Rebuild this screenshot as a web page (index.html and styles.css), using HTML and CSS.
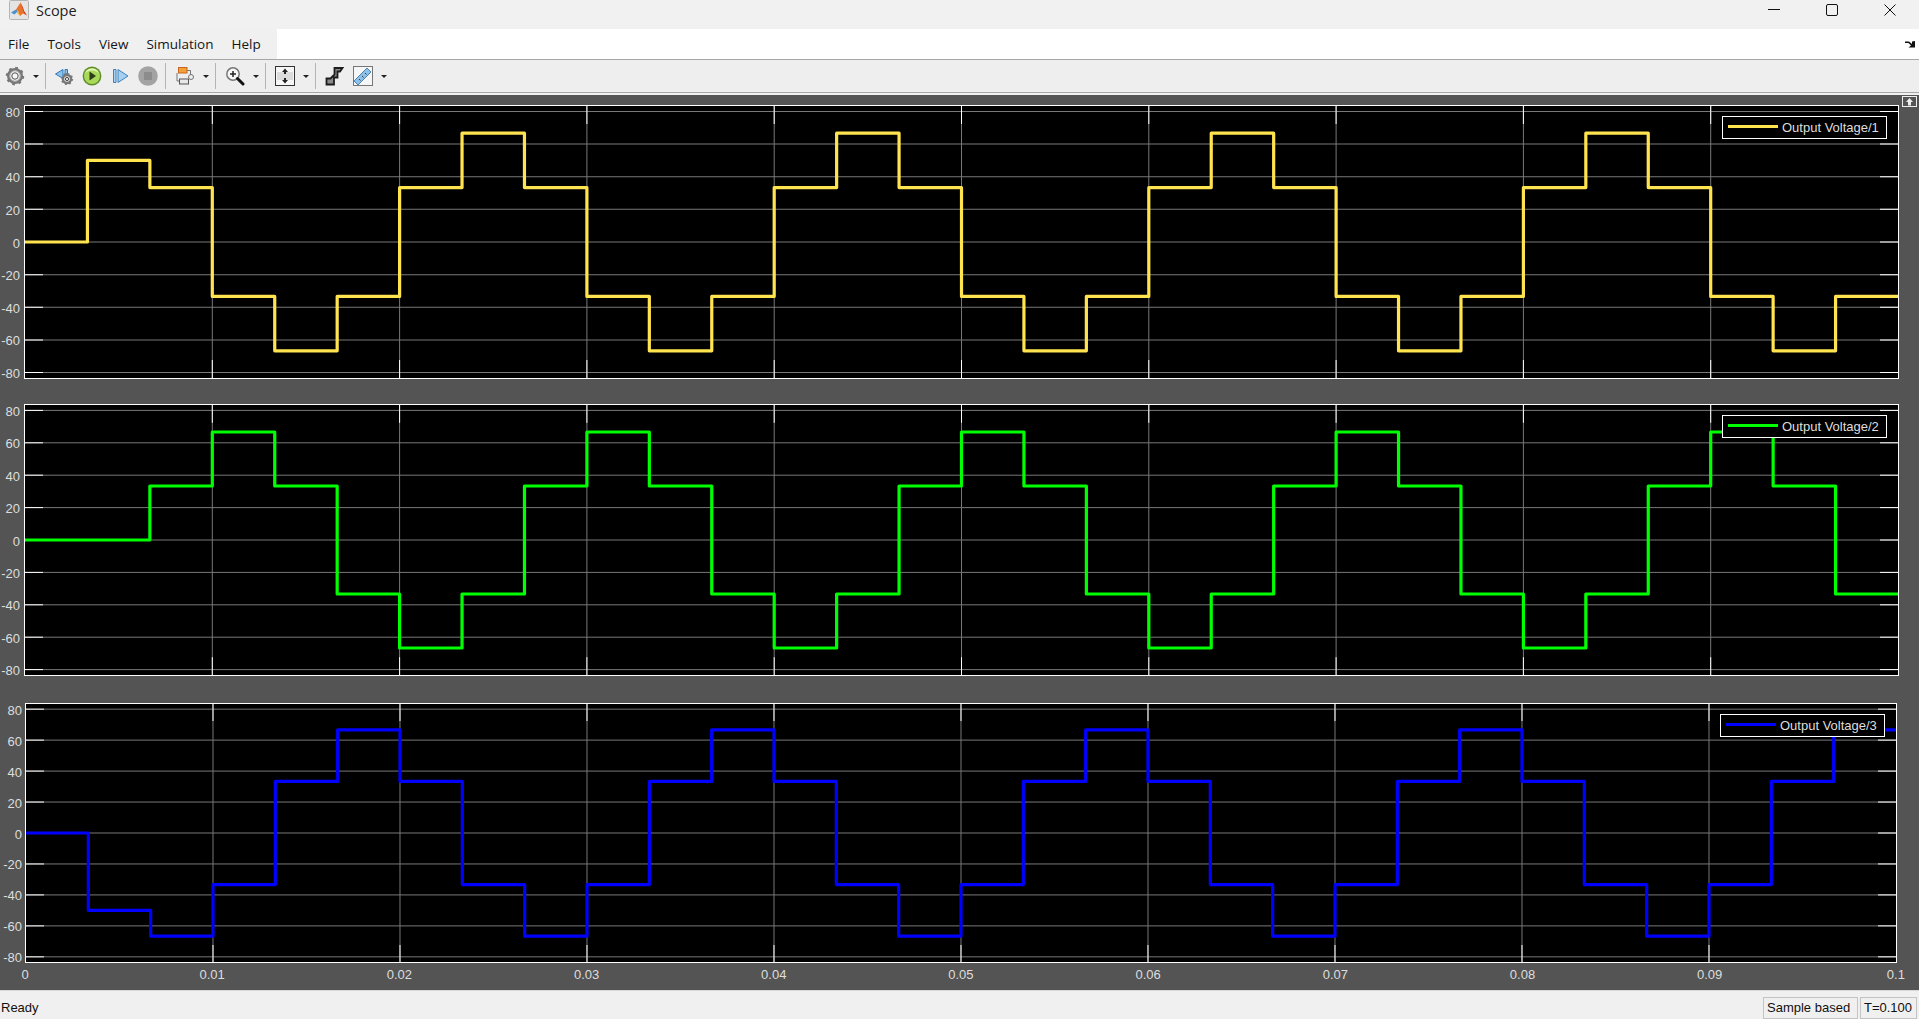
FILE: index.html
```html
<!DOCTYPE html>
<html lang="en">
<head>
<meta charset="utf-8">
<title>Scope</title>
<link rel="stylesheet" href="styles.css">
</head>
<body>
<svg class="defs" width="0" height="0" aria-hidden="true">
  <defs>
    <g id="grid">
      <path class="gridline" d="M0 -2.4H30M0 -1.8H30M0 -1.2H30M0 -.6H30M0 0H30M0 .6H30M0 1.2H30M0 1.8H30M0 2.4H30M3 -2.5V2.5M6 -2.5V2.5M9 -2.5V2.5M12 -2.5V2.5M15 -2.5V2.5M18 -2.5V2.5M21 -2.5V2.5M24 -2.5V2.5M27 -2.5V2.5"/>
      <path class="tick" d="M0 -2.4H.288M0 -1.8H.288M0 -1.2H.288M0 -.6H.288M0 0H.288M0 .6H.288M0 1.2H.288M0 1.8H.288M0 2.4H.288M29.712 -2.4H30M29.712 -1.8H30M29.712 -1.2H30M29.712 -.6H30M29.712 0H30M29.712 .6H30M29.712 1.2H30M29.712 1.8H30M29.712 2.4H30"/>
      <path class="tick" d="M3 -2.5V-2.17M6 -2.5V-2.17M9 -2.5V-2.17M12 -2.5V-2.17M15 -2.5V-2.17M18 -2.5V-2.17M21 -2.5V-2.17M24 -2.5V-2.17M27 -2.5V-2.17M3 2.17V2.5M6 2.17V2.5M9 2.17V2.5M12 2.17V2.5M15 2.17V2.5M18 2.17V2.5M21 2.17V2.5M24 2.17V2.5M27 2.17V2.5"/>
    </g>
  </defs>
</svg>

<header class="titlebar">
  <svg class="logo" viewBox="0 0 20 20" width="20" height="20">
    <rect x=".5" y=".5" width="19" height="19" rx="1" fill="#e4e4e4" stroke="#b4b4b4"/>
    <path d="M2 12.5 7 9.5 9 11 5.5 14.5Z" fill="#4b8fc9"/>
    <path d="M7 9.5 11.5 2.5 15 11 18 15.5 14 13.5 11 16 9 11Z" fill="#e8742a"/>
    <path d="M11.5 2.5 14 7.5 15 11 18 15.5 15 13 13 7Z" fill="#c9332a"/>
    <path d="M9 11 11 16 8 13Z" fill="#f0b030"/>
  </svg>
  <span class="title">Scope</span>
  <div class="winctl">
    <svg class="winbtn" viewBox="0 0 12 12" width="12" height="12"><path d="M0 5.500H12" stroke="#111" fill="none"/></svg>
    <svg class="winbtn" viewBox="0 0 12 12" width="12" height="12"><rect x=".5" y=".5" width="11" height="11" rx="1.5" stroke="#111" fill="none"/></svg>
    <svg class="winbtn" viewBox="0 0 12 12" width="12" height="12"><path d="M.5 .5 11.500 11.500M11.500 .5 .5 11.500" stroke="#111" fill="none"/></svg>
  </div>
</header>

<nav class="menubar">
  <div class="menus">
    <span class="menu">File</span>
    <span class="menu">Tools</span>
    <span class="menu">View</span>
    <span class="menu">Simulation</span>
    <span class="menu">Help</span>
  </div>
  <svg class="menu-dock" viewBox="0 0 10 8" width="10" height="8"><path d="M0 1.500H4L7 4V1.500L10 1V7.500H3.500L6 5.500 3.500 3H0Z" fill="#111"/></svg>
</nav>

<div class="toolbar">
  <span class="tool"><svg viewBox="0 0 20 20" width="20" height="20"><circle cx="10" cy="10" r="6.500" fill="none" stroke="#777" stroke-width="3"/><circle cx="10" cy="10" r="8" fill="none" stroke="#777" stroke-width="2.400" stroke-dasharray="2.600 3.680"/><circle cx="10" cy="10" r="3.200" fill="#f4f4f4" stroke="#555"/><circle cx="10" cy="10" r="5.300" fill="none" stroke="#bbb"/></svg></span>
  <span class="drop"></span>
  <span class="sep sep-first"></span>
  <span class="tool"><svg viewBox="0 0 20 20" width="20" height="20"><path d="M9 3.500V12.500L1.500 8Z" fill="#8fc3ec" stroke="#2f78b8"/><path d="M11 3.500H13.500V8H11Z" fill="#8fc3ec" stroke="#2f78b8"/><circle cx="13" cy="13" r="4" fill="none" stroke="#777" stroke-width="2.400"/><circle cx="13" cy="13" r="5.300" fill="none" stroke="#777" stroke-width="1.600" stroke-dasharray="1.800 2.360"/><circle cx="13" cy="13" r="1.600" fill="#eee" stroke="#444"/></svg></span>
  <span class="tool"><svg viewBox="0 0 20 20" width="20" height="20"><circle cx="10" cy="10" r="9.400" fill="#5d8c26"/><circle cx="10" cy="10" r="8" fill="#a8d95a"/><path d="M3 8.500a7 6 0 0 1 14 0a7 4 0 0 0-14 0Z" fill="#e4f5c0"/><path d="M7.500 5.500 14 10 7.500 14.500Z" fill="#2e3d18"/></svg></span>
  <span class="tool"><svg viewBox="0 0 20 20" width="20" height="20"><path d="M3.500 3.500H6V16.500H3.500Z" fill="#a6d0f0" stroke="#3d82c0"/><path d="M8 3.500V16.500L18 10Z" fill="#a6d0f0" stroke="#3d82c0"/></svg></span>
  <span class="tool"><svg viewBox="0 0 20 20" width="20" height="20"><circle cx="10" cy="10" r="9.800" fill="#a3a3a3"/><rect x="6" y="6" width="8" height="8" fill="#8c8c8c"/></svg></span>
  <span class="sep sep-wide"></span>
  <span class="tool"><svg viewBox="0 0 20 20" width="20" height="20"><path d="M12 4.500H15.500V9M2 7V15H4.500" fill="none" stroke="#777"/><rect x="3.500" y="1.500" width="8.500" height="5.500" fill="#f2a03a" stroke="#c8651e"/><rect x="4.500" y="13" width="9" height="5" fill="#e8e8e8" stroke="#555"/><circle cx="16" cy="11" r="2.500" fill="#eee" stroke="#777"/></svg></span>
  <span class="drop"></span>
  <span class="sep"></span>
  <span class="tool"><svg viewBox="0 0 20 20" width="20" height="20"><circle cx="8" cy="8" r="6.200" fill="#f6f6f6" stroke="#777" stroke-width="1.500"/><path d="M5 8H11M8 5V11" stroke="#222" stroke-width="1.500"/><path d="M12.500 12.500 18 18" stroke="#111" stroke-width="3" stroke-linecap="round"/></svg></span>
  <span class="drop"></span>
  <span class="sep"></span>
  <span class="tool"><svg viewBox="0 0 20 20" width="20" height="20"><rect x=".5" y=".5" width="19" height="19" fill="#f6f6f6" stroke="#333"/><rect x="2" y="6" width="16" height="8" fill="#dcdcdc"/><path d="M10 2.500 13 6H11V8H9V6H7ZM10 17.500 13 14H11V12H9V14H7Z" fill="#222"/></svg></span>
  <span class="drop"></span>
  <span class="sep"></span>
  <span class="tool"><svg viewBox="0 0 20 20" width="20" height="20"><path d="M1.500 18.500V12.500H5.500L9.500 8.500V2H17.500L15 5.500H12.500V11.500H9V18.500Z" fill="#8a8a8a" stroke="#1c1c1c" stroke-width="1.800"/></svg></span>
  <span class="tool"><svg viewBox="0 0 20 20" width="20" height="20"><rect x=".5" y=".5" width="19" height="19" fill="#f6f6f6" stroke="#777"/><path d="M1 15 14 2 18 6 5 19Z" fill="#8cc0e6" stroke="#4a86b8"/><path d="M6 13 7.500 14.500M9 10 10.500 11.500M12 7 13.500 8.500" stroke="#345" fill="none"/></svg></span>
  <span class="drop"></span>
</div>

<main class="scope">
  <svg class="undock" viewBox="0 0 15 11" width="15" height="11"><rect x=".5" y=".5" width="14" height="10" fill="#555" stroke="#eee"/><path d="M7.500 2 11 6H9V9.500H6V6H4Z" fill="#eee"/></svg>

  <section class="row row-a">
    <div class="ylabels"><span>80</span><span>60</span><span>40</span><span>20</span><span>0</span><span>-20</span><span>-40</span><span>-60</span><span>-80</span></div>
    <div class="plot">
      <svg class="axes" viewBox="0 -2.5 30 5" preserveAspectRatio="none"><use href="#grid"/><path class="trace trace-yellow" d="M0 0H1V-1.500H2V-1H3V1H4V2H5V1H6V-1H7V-2H8V-1H9V1H10V2H11V1H12V-1H13V-2H14V-1H15V1H16V2H17V1H18V-1H19V-2H20V-1H21V1H22V2H23V1H24V-1H25V-2H26V-1H27V1H28V2H29V1H30"/></svg>
      <div class="legend"><i class="swatch swatch-yellow"></i><span>Output Voltage/1</span></div>
    </div>
  </section>

  <section class="row row-b">
    <div class="ylabels"><span>80</span><span>60</span><span>40</span><span>20</span><span>0</span><span>-20</span><span>-40</span><span>-60</span><span>-80</span></div>
    <div class="plot">
      <svg class="axes" viewBox="0 -2.5 30 5" preserveAspectRatio="none"><use href="#grid"/><path class="trace trace-green" d="M0 0H2V-1H3V-2H4V-1H5V1H6V2H7V1H8V-1H9V-2H10V-1H11V1H12V2H13V1H14V-1H15V-2H16V-1H17V1H18V2H19V1H20V-1H21V-2H22V-1H23V1H24V2H25V1H26V-1H27V-2H28V-1H29V1H30"/></svg>
      <div class="legend"><i class="swatch swatch-green"></i><span>Output Voltage/2</span></div>
    </div>
  </section>

  <section class="row row-c">
    <div class="ylabels"><span>80</span><span>60</span><span>40</span><span>20</span><span>0</span><span>-20</span><span>-40</span><span>-60</span><span>-80</span></div>
    <div class="plot">
      <svg class="axes" viewBox="0 -2.5 30 5" preserveAspectRatio="none"><use href="#grid"/><path class="trace trace-blue" d="M0 0H1V1.500H2V2H3V1H4V-1H5V-2H6V-1H7V1H8V2H9V1H10V-1H11V-2H12V-1H13V1H14V2H15V1H16V-1H17V-2H18V-1H19V1H20V2H21V1H22V-1H23V-2H24V-1H25V1H26V2H27V1H28V-1H29V-2H30"/></svg>
      <div class="legend"><i class="swatch swatch-blue"></i><span>Output Voltage/3</span></div>
    </div>
  </section>

  <div class="xlabels"><span>0</span><span>0.01</span><span>0.02</span><span>0.03</span><span>0.04</span><span>0.05</span><span>0.06</span><span>0.07</span><span>0.08</span><span>0.09</span><span class="xlast">0.1</span></div>
</main>

<footer class="status">
  <span class="ready">Ready</span>
  <span class="cell cell-mode">Sample based</span>
  <span class="cell cell-time">T=0.100</span>
</footer>
</body>
</html>
```

FILE: styles.css
```css
* { box-sizing: border-box; }
html, body { height: 100%; }
body {
  margin: 0;
  height: 100vh;
  overflow: hidden;
  display: flex;
  flex-direction: column;
  background: #f0f0f0;
  color: #111;
  font-family: "Liberation Sans", Arial, sans-serif;
}
.defs { position: absolute; }

/* title bar */
.titlebar {
  flex: none;
  height: 29px;
  display: flex;
  align-items: flex-start;
  padding-left: 9px;
  background: #f1f1f1;
}
.title {
  margin-left: 7px;
  font: 14.5px/22px "Open Sans", sans-serif;
  color: #222;
}
.winctl {
  margin-left: auto;
  display: flex;
  gap: 46px;
  padding: 4px 23px 0 0;
}
.winbtn { display: block; }

/* menu bar */
.menubar {
  flex: none;
  height: 31px;
  display: flex;
  align-items: stretch;
  justify-content: space-between;
  background: #fff;
  border-bottom: 1px solid #a6a6a6;
}
.menus {
  width: 277px;
  display: flex;
  gap: 18px;
  padding-left: 8px;
  background: #f0f0f0;
}
.menu {
  font: 13.5px/30px "Open Sans", sans-serif;
  color: #151515;
}
.menu-dock { margin: 11px 4px 0 0; }

/* tool bar */
.toolbar {
  flex: none;
  height: 33px;
  display: flex;
  align-items: center;
  padding-left: 1px;
  background: #eeeeee;
  border-bottom: 1px solid #a6a6a6;
}
.tool {
  width: 28px;
  height: 20px;
  display: flex;
  justify-content: center;
}
.drop {
  width: 14px;
  height: 3px;
  position: relative;
}
.drop::after {
  content: "";
  position: absolute;
  left: 4px;
  top: 0;
  border-left: 3px solid transparent;
  border-right: 3px solid transparent;
  border-top: 3px solid #222;
}
.sep {
  width: 1px;
  height: 26px;
  margin: 0 5px 0 2px;
  background: #b4b4b4;
}
.sep-first { margin-right: 4px; }
.sep-wide { margin-left: 3px; }

/* scope area */
.scope {
  position: relative;
  flex: 1;
  min-height: 0;
  margin-top: 2px;
  background: #545454;
  color: #dedede;
  font-size: 13px;
  padding-top: 10px;
  display: flex;
  flex-direction: column;
}
.undock {
  position: absolute;
  right: 2px;
  top: 1px;
}
.row {
  flex: none;
  display: grid;
  grid-template-columns: 24px minmax(0, 1fr);
  grid-template-rows: minmax(0, 1fr);
}
.row-a { height: 274px; margin-right: 20px; }
.row-b { height: 272px; margin-top: 25px; margin-right: 20px; }
.row-c { height: 260px; margin-top: 27px; margin-right: 22px; grid-template-columns: 25px minmax(0, 1fr); }

.ylabels {
  display: flex;
  flex-direction: column;
  justify-content: space-between;
  align-items: flex-end;
  padding: 7px 4px 5px 0;
}
.row-c .ylabels { padding-right: 3px; }
.ylabels span {
  height: 0;
  line-height: 0;
  margin-top: 1px;
  white-space: nowrap;
}
.plot {
  position: relative;
  min-height: 0;
  border: 1px solid #fff;
  background: #000;
}
.axes {
  display: block;
  width: 100%;
  height: 100%;
  overflow: hidden;
}
.gridline, .tick, .trace {
  fill: none;
  vector-effect: non-scaling-stroke;
}
.gridline { stroke: #787878; stroke-width: 1; }
.tick { stroke: #fff; stroke-width: 1; }
.trace { stroke-width: 3.2; stroke-linejoin: round; }
.trace-yellow { stroke: #ffe34f; }
.trace-green { stroke: #00ff00; }
.trace-blue { stroke: #0000ff; }

.legend {
  position: absolute;
  top: 10px;
  right: 11px;
  width: 165px;
  height: 23px;
  display: flex;
  align-items: center;
  padding-left: 5px;
  background: #000;
  border: 1px solid #fff;
  color: #dedede;
  font-size: 13px;
  white-space: nowrap;
}
.swatch {
  flex: none;
  width: 50px;
  height: 3px;
  margin-right: 4px;
  margin-top: -2px;
}
.swatch-yellow { background: #ffe34f; }
.swatch-green { background: #00ff00; }
.swatch-blue { background: #0000ff; }

.xlabels {
  flex: 1;
  display: flex;
  justify-content: space-between;
  padding: 0 22px 0 25px;
}
.xlabels span {
  width: 0;
  display: flex;
  justify-content: center;
  line-height: 23px;
  white-space: nowrap;
}
.xlabels .xlast { transform: translateX(-1px); }

/* status bar */
.status {
  flex: none;
  height: 29px;
  display: flex;
  align-items: flex-start;
  padding: 6px 2px 0 1px;
  border-top: 1px solid #d8d8d8;
  background: #f0f0f0;
  font-size: 13px;
  color: #111;
}
.ready { margin-right: auto; line-height: 21px; }
.cell {
  height: 22px;
  line-height: 20px;
  padding-left: 3px;
  border: 1px solid #c4c4c4;
}
.cell-mode { width: 95px; margin-right: 2px; }
.cell-time { width: 57px; }
```
